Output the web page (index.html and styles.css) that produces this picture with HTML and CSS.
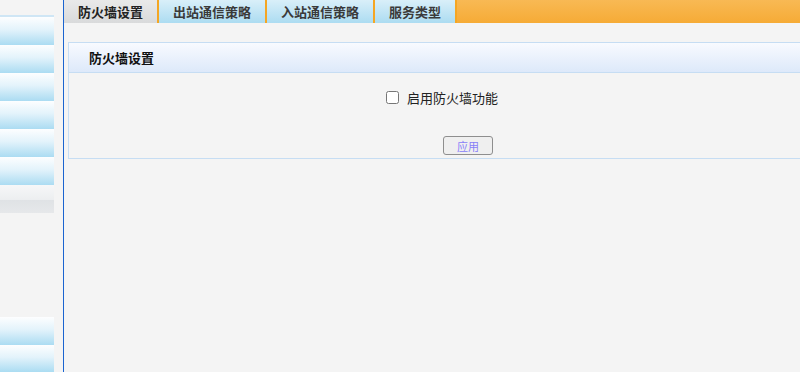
FILE: index.html
```html
<!DOCTYPE html>
<html lang="zh-CN">
<head>
  <meta charset="UTF-8" />
  <title>防火墙设置</title>
  <link rel="stylesheet" href="styles.css">
</head>
<body>

  <div class="sidebar">
    <div class="side-top"></div>
    <div class="side-item"></div>
    <div class="side-item"></div>
    <div class="side-item"></div>
    <div class="side-item"></div>
    <div class="side-item"></div>
    <div class="side-item"></div>
    <div class="side-grey"></div>
    <div class="side-grey dark"></div>
    <div class="side-item bottom"></div>
    <div class="side-item"></div>
  </div>

  <div class="main">
    <div class="tabs">
      <div class="tab active">防火墙设置</div>
      <div class="tab">出站通信策略</div>
      <div class="tab">入站通信策略</div>
      <div class="tab">服务类型</div>
    </div>

    <div class="panel">
      <div class="panel-head">防火墙设置</div>
      <div class="panel-body">
        <label class="check-row">
          <input type="checkbox" />
          <span>启用防火墙功能</span>
        </label>
        <button class="apply">应用</button>
      </div>
    </div>
  </div>

</body>
</html>
```

FILE: styles.css
```css
html, body {
  height: 100%;
}

body {
  margin: 0;
  background-color: #f4f4f4;
  font-family: "Noto Sans CJK SC", "Noto Sans", sans-serif;
  font-size: 13px;
  color: #222;
  display: flex;
  overflow: hidden;
}

/* left menu */
.sidebar {
  width: 54px;
  margin-right: 9px;
  display: flex;
  flex-direction: column;
  padding-top: 15px;
}

.side-top {
  height: 2px;
  background: #cfe6f5;
}

.side-item {
  height: 28px;
  flex-shrink: 0;
  background: linear-gradient(to bottom, #fdfeff 0%, #e3f3fb 45%, #abdcf2 100%);
}

.side-item.bottom {
  margin-top: auto;
}

.side-item:last-child {
  height: 27px;
}

.side-grey {
  height: 15px;
  background: linear-gradient(to bottom, #f6f7f8, #eceef0);
}

.side-grey.dark {
  height: 13px;
  background: linear-gradient(to bottom, #dfe2e5, #e6e8ea);
}

/* right part */
.main {
  flex: 1;
  border-left: 1px solid #1a64d0;
  overflow: hidden;
}

.tabs {
  height: 23px;
  display: flex;
  background: linear-gradient(to bottom, #f8b954, #f6ab36);
}

.tab {
  padding: 0 14px;
  line-height: 23px;
  font-weight: bold;
  color: #3a3a3a;
  border-right: 2px solid #f5a623;
  background: linear-gradient(to bottom, #d9eff9, #acdcf1);
}

.tab.active {
  background: linear-gradient(to bottom, #e9e9e9, #d9dadb);
  color: #222;
}

.panel {
  margin: 19px 0 0 4px;
  width: 760px;
  border: 1px solid #c6ddf3;
}

.panel-head {
  height: 29px;
  line-height: 29px;
  padding-left: 20px;
  font-weight: bold;
  color: #111;
  border-bottom: 1px solid #c6ddf3;
  background: linear-gradient(to bottom, #f8faff, #dde9fa);
}

.panel-body {
  height: 85px;
}

.check-row {
  display: flex;
  align-items: center;
  padding: 15px 0 0 315px;
}

.check-row input {
  margin: 0 8px 0 2px;
  width: 13px;
  height: 13px;
}

.apply {
  display: block;
  margin: 29px 0 0 374px;
  width: 50px;
  height: 19px;
  padding: 0;
  font-family: "Noto Sans CJK SC", sans-serif;
  font-size: 11px;
  color: #8880f8;
  background: #efefef;
  border: 1px solid #8e8e8e;
  border-radius: 3px;
}
```
